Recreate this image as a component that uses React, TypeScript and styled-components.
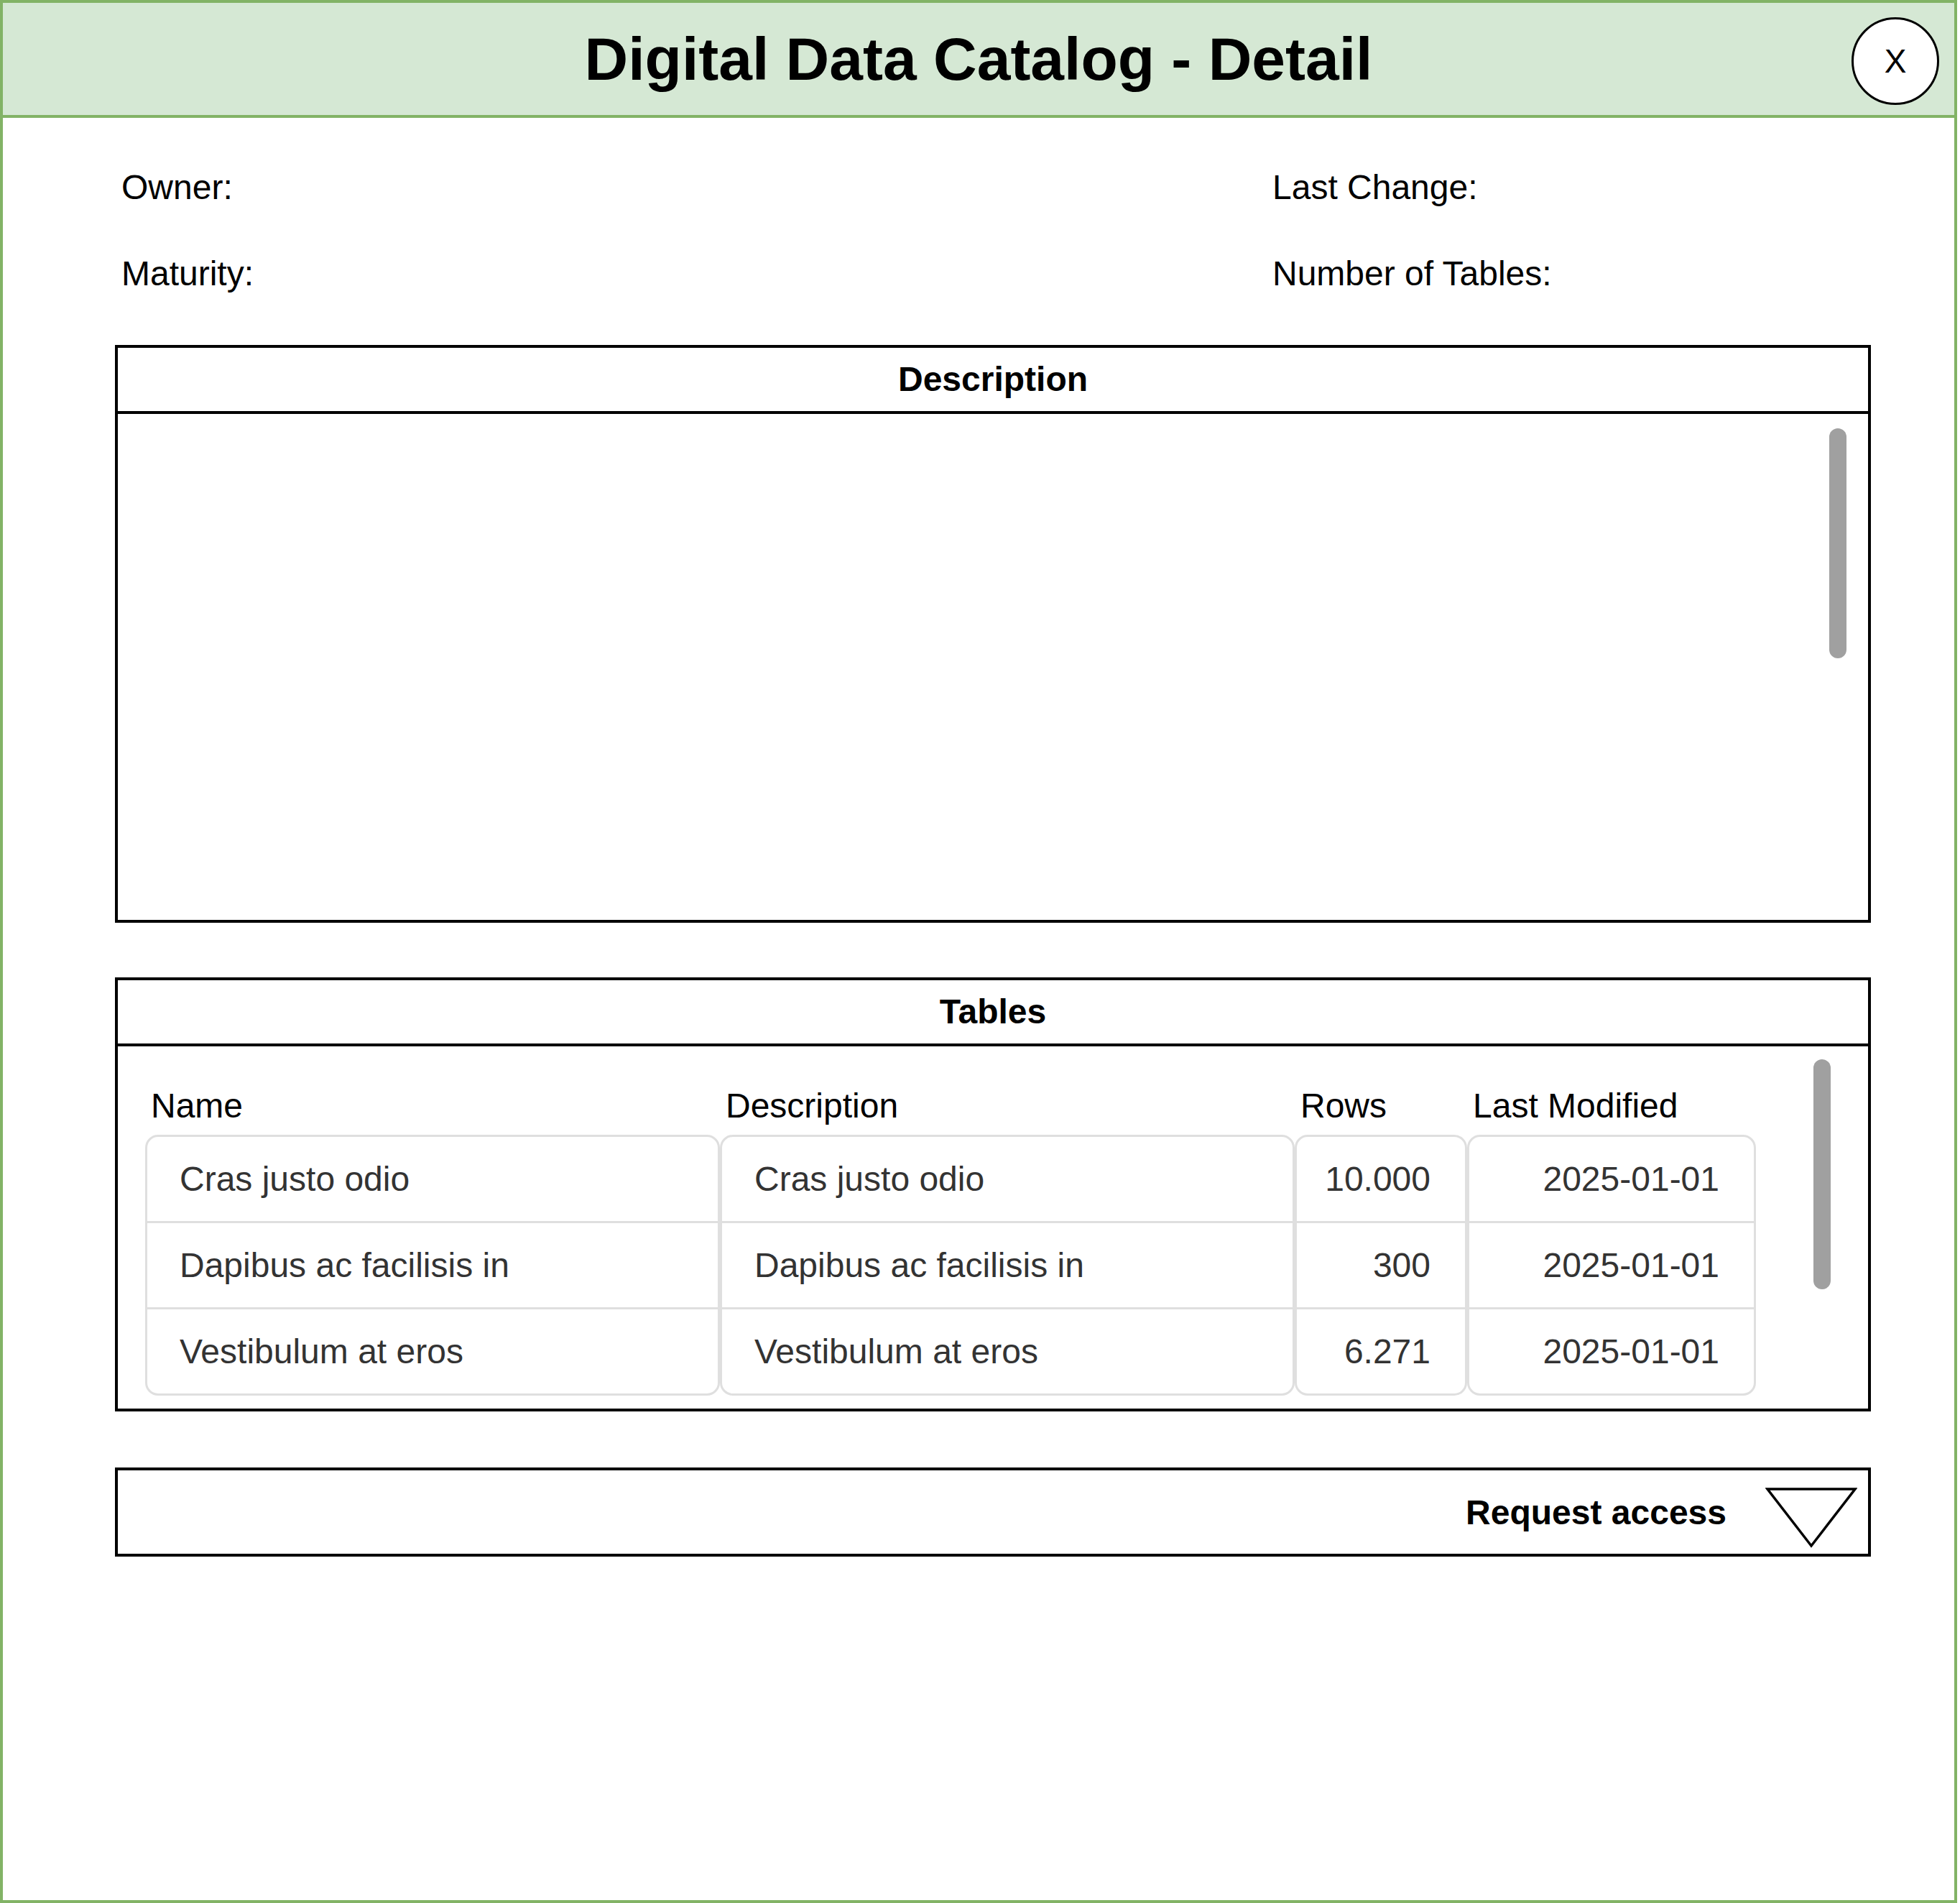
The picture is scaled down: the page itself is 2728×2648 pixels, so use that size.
import React from "react";
import styled, { createGlobalStyle } from "styled-components";

const GlobalStyle = createGlobalStyle`
    * {
        box-sizing: border-box;
    }
    body {
        margin: 0;
        background: #ffffff;
        font-family: "Liberation Sans", Arial, Helvetica, sans-serif;
        color: #000000;
    }
`

const Frame = styled.div`
    width: 2724px;
    height: 2648px;
    border: 4px solid #82b366;
    display: flex;
    flex-direction: column;
`

const Header = styled.header`
    height: 160px;
    background-color: #d5e8d4;
    border-bottom: 4px solid #82b366;
    display: grid;
    grid-template-columns: 1fr auto 1fr;
    align-items: center;
`

const Title = styled.h1`
    grid-column: 2;
    margin: 0;
    font-size: 84px;
    line-height: 1;
    font-weight: 700;
`

const CloseButton = styled.button`
    grid-column: 3;
    justify-self: end;
    margin: 6px 21px 0 0;
    width: 122px;
    height: 122px;
    border-radius: 50%;
    border: 3px solid #000000;
    background-color: #ffffff;
    font-family: inherit;
    font-size: 46px;
    color: #000000;
    padding: 0;
    display: flex;
    align-items: center;
    justify-content: center;
`

const Content = styled.main`
    display: flex;
    flex-direction: column;
    padding: 69px 116px 0 156px;
`

const InfoGrid = styled.div`
    display: grid;
    grid-template-columns: 1602px 1fr;
    row-gap: 64px;
    padding-left: 9px;
    margin-bottom: 71px;
`

const InfoLabel = styled.div`
    font-size: 48px;
    line-height: 56px;
`

const Panel = styled.section<{ $gap?: number }>`
    border: 4px solid #000000;
    margin-bottom: ${({ $gap }) => $gap ?? 0}px;
`

const PanelTitle = styled.div`
    height: 92px;
    line-height: 88px;
    border-bottom: 4px solid #000000;
    text-align: center;
    font-size: 48px;
    font-weight: 700;
`

const DescriptionBody = styled.div`
    height: 704px;
    display: flex;
    justify-content: flex-end;
    align-items: flex-start;
    padding: 20px 30px 0 0;
`

const ScrollThumb = styled.div`
    width: 24px;
    height: 320px;
    border-radius: 12px;
    background-color: #a0a0a0;
    flex: none;
`

const TablesBody = styled.div`
    display: flex;
    align-items: flex-start;
    justify-content: space-between;
    padding: 18px 52px 18px 38px;
`

const TableGrid = styled.div`
    display: flex;
`

const Column = styled.div<{ $width: number }>`
    width: ${({ $width }) => $width}px;
    display: flex;
    flex-direction: column;
`

const ColumnHeader = styled.div`
    padding: 37px 0 0 8px;
    margin-bottom: 12px;
    font-size: 48px;
    line-height: 56px;
`

const ListGroup = styled.ul`
    list-style: none;
    margin: 0;
    padding: 0;
    border: 3px solid #dfdfdf;
    border-radius: 18px;
    overflow: hidden;
`

const ListItem = styled.li<{ $align: "left" | "right" }>`
    height: 117px;
    display: flex;
    align-items: center;
    justify-content: ${({ $align }) => ($align === "right" ? "flex-end" : "flex-start")};
    padding: 0 48px 0 45px;
    font-size: 48px;
    color: #333333;
    white-space: nowrap;

    & + & {
        height: 120px;
        border-top: 3px solid #dfdfdf;
    }
`

const RequestBar = styled.div`
    height: 124px;
    border: 4px solid #000000;
    display: flex;
    justify-content: flex-end;
    align-items: center;
    gap: 54px;
    padding-right: 15px;
`

const RequestLabel = styled.span`
    font-size: 48px;
    font-weight: 700;
`

const DropArrow = styled.svg`
    width: 128px;
    height: 86px;
    margin-top: 16px;
    flex: none;
`

type Row = {
    name: string
    description: string
    rows: string
    modified: string
}

const data: Row[] = [
    { name: "Cras justo odio", description: "Cras justo odio", rows: "10.000", modified: "2025-01-01" },
    { name: "Dapibus ac facilisis in", description: "Dapibus ac facilisis in", rows: "300", modified: "2025-01-01" },
    { name: "Vestibulum at eros", description: "Vestibulum at eros", rows: "6.271", modified: "2025-01-01" },
]

const columns: { title: string; key: keyof Row; width: number; align: "left" | "right" }[] = [
    { title: "Name", key: "name", width: 800, align: "left" },
    { title: "Description", key: "description", width: 800, align: "left" },
    { title: "Rows", key: "rows", width: 240, align: "right" },
    { title: "Last Modified", key: "modified", width: 402, align: "right" },
]

function App() {
    return (
        <>
            <GlobalStyle />
            <Frame>
                <Header>
                    <Title>Digital Data Catalog - Detail</Title>
                    <CloseButton>X</CloseButton>
                </Header>

                <Content>
                    <InfoGrid>
                        <InfoLabel>Owner:</InfoLabel>
                        <InfoLabel>Last Change:</InfoLabel>
                        <InfoLabel>Maturity:</InfoLabel>
                        <InfoLabel>Number of Tables:</InfoLabel>
                    </InfoGrid>

                    <Panel $gap={76}>
                        <PanelTitle>Description</PanelTitle>
                        <DescriptionBody>
                            <ScrollThumb />
                        </DescriptionBody>
                    </Panel>

                    <Panel $gap={78}>
                        <PanelTitle>Tables</PanelTitle>
                        <TablesBody>
                            <TableGrid>
                                {columns.map((col) => (
                                    <Column key={col.key} $width={col.width}>
                                        <ColumnHeader>{col.title}</ColumnHeader>
                                        <ListGroup>
                                            {data.map((row, i) => (
                                                <ListItem key={i} $align={col.align}>
                                                    {row[col.key]}
                                                </ListItem>
                                            ))}
                                        </ListGroup>
                                    </Column>
                                ))}
                            </TableGrid>
                            <ScrollThumb />
                        </TablesBody>
                    </Panel>

                    <RequestBar>
                        <RequestLabel>Request access</RequestLabel>
                        <DropArrow viewBox="0 0 128 86">
                            <polygon
                                points="3,3 125,3 64,82"
                                fill="#ffffff"
                                stroke="#000000"
                                strokeWidth="3.5"
                                strokeLinejoin="miter"
                            />
                        </DropArrow>
                    </RequestBar>
                </Content>
            </Frame>
        </>
    )
}

export default App;
